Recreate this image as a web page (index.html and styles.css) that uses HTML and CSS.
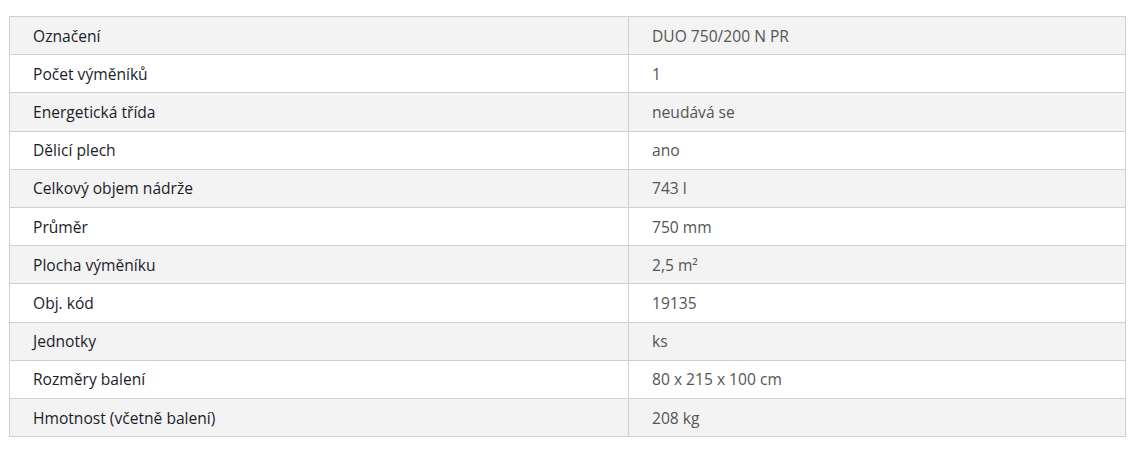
FILE: index.html
```html
<!DOCTYPE html>
<html lang="cs">
<head>
<meta charset="utf-8">
<link rel="stylesheet" href="styles.css">
</head>
<body>
<table class="params">
  <tr><td class="name">Označení</td><td class="val">DUO 750/200 N PR</td></tr>
  <tr><td class="name">Počet výměníků</td><td class="val">1</td></tr>
  <tr><td class="name">Energetická třída</td><td class="val">neudává se</td></tr>
  <tr><td class="name">Dělicí plech</td><td class="val">ano</td></tr>
  <tr><td class="name">Celkový objem nádrže</td><td class="val">743 l</td></tr>
  <tr><td class="name">Průměr</td><td class="val">750 mm</td></tr>
  <tr><td class="name">Plocha výměníku</td><td class="val">2,5 m²</td></tr>
  <tr><td class="name">Obj. kód</td><td class="val">19135</td></tr>
  <tr><td class="name">Jednotky</td><td class="val">ks</td></tr>
  <tr><td class="name">Rozměry balení</td><td class="val">80 x 215 x 100 cm</td></tr>
  <tr><td class="name">Hmotnost (včetně balení)</td><td class="val">208 kg</td></tr>
</table>
</body>
</html>
```

FILE: styles.css
```css
html, body {
  margin: 0;
  padding: 0;
  background: #fff;
}
body {
  padding: 16px 13px 0 9px;
  font-family: "Open Sans", sans-serif;
  font-size: 15.6px;
}
.params {
  width: 1117px;
  border-collapse: collapse;
  border: 1px solid #d0d0d0;
}
.params tr:nth-child(odd) {
  background: #f3f3f3;
}
.params td {
  border: 1px solid #d0d0d0;
  padding: 8.5px 23px 7.5px 23px;
  line-height: 21.2px;
}
.name {
  width: 572px;
  color: #1c1c2c;
}
.val {
  color: #555;
}
```
